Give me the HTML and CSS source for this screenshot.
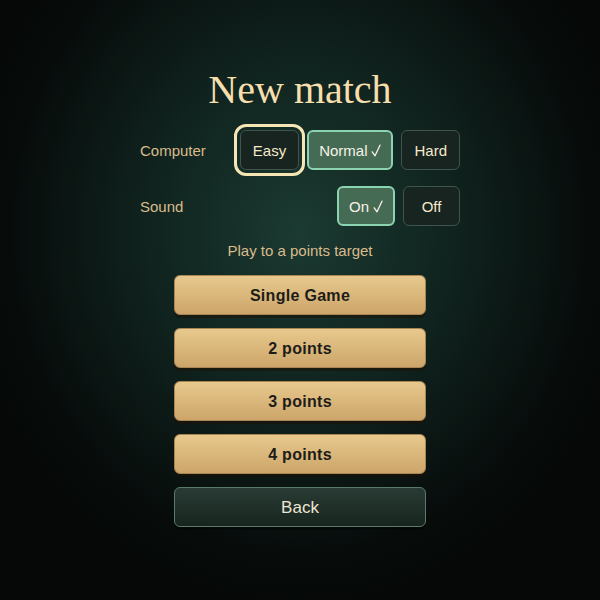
FILE: index.html
```html
<!DOCTYPE html>
<html lang="en">
<head>
<meta charset="utf-8">
<title>New match</title>
<link rel="stylesheet" href="styles.css">
</head>
<body>
<main class="screen">
  <h1 class="title">New match</h1>
  <div class="settings">
    <div class="row">
      <span class="label">Computer</span>
      <div class="choices">
        <button class="choice focused">Easy</button>
        <button class="choice selected">Normal<svg class="check" viewBox="0 0 10 13" width="10" height="13" aria-hidden="true"><path d="M1.2 7.8 L4 11.8 L9 1.2" fill="none" stroke="currentColor" stroke-width="1.3" stroke-linecap="round" stroke-linejoin="round"/></svg></button>
        <button class="choice">Hard</button>
      </div>
    </div>
    <div class="row">
      <span class="label">Sound</span>
      <div class="choices">
        <button class="choice selected">On<svg class="check" viewBox="0 0 10 13" width="10" height="13" aria-hidden="true"><path d="M1.2 7.8 L4 11.8 L9 1.2" fill="none" stroke="currentColor" stroke-width="1.3" stroke-linecap="round" stroke-linejoin="round"/></svg></button>
        <button class="choice">Off</button>
      </div>
    </div>
  </div>
  <p class="subtitle">Play to a points target</p>
  <div class="menu">
    <button class="gold">Single Game</button>
    <button class="gold">2 points</button>
    <button class="gold">3 points</button>
    <button class="gold">4 points</button>
    <button class="back">Back</button>
  </div>
</main>
</body>
</html>
```
FILE: styles.css
```css
html, body {
  margin: 0;
  padding: 0;
  height: 100%;
}
body {
  background: radial-gradient(ellipse 340px 380px at 300px 230px, #1b3a32 0%, #10231e 45%, #070c0b 85%, #050807 100%);
  background-color: #050807;
  font-family: "Liberation Sans", Arial, sans-serif;
}
.screen {
  width: 320px;
  margin: 0 auto;
  padding-top: 67px;
  display: flex;
  flex-direction: column;
  align-items: center;
}
.title {
  margin: 0;
  font-family: "Liberation Serif", "Times New Roman", serif;
  font-weight: normal;
  font-size: 40px;
  line-height: 45px;
  color: #f6dfad;
}
.settings {
  width: 320px;
  margin-top: 18px;
  display: flex;
  flex-direction: column;
  gap: 16px;
}
.row {
  display: flex;
  justify-content: space-between;
  align-items: center;
}
.label {
  font-size: 15px;
  color: #d9bb8c;
}
.choices {
  display: flex;
  gap: 8px;
}
.choice {
  height: 40px;
  min-width: 57px;
  padding: 0 12px;
  display: inline-flex;
  align-items: center;
  justify-content: center;
  font-family: inherit;
  font-size: 15px;
  color: #f5eacd;
  background: #18241f;
  border: 1px solid #3f544c;
  border-radius: 6px;
}
.choice.selected {
  background: #466b55;
  border: 2px solid #8cd3b2;
  padding: 0 10px;
  color: #f7f2e6;
}
.check {
  margin-left: 4px;
  margin-top: 1px;
}
.choice.focused {
  outline: 3px solid #f7e6b5;
  outline-offset: 3px;
}
.subtitle {
  margin: 16px 0 0;
  font-size: 15px;
  line-height: 18px;
  color: #d9bb8c;
}
.menu {
  width: 252px;
  margin-top: 15px;
  display: flex;
  flex-direction: column;
  gap: 13px;
}
.gold, .back {
  height: 40px;
  width: 100%;
  padding-top: 2px;
  border-radius: 6px;
  font-family: inherit;
}
.gold {
  background: linear-gradient(to bottom, #e8c98d, #cca56a);
  border: 1px solid #a98553;
  box-shadow: 0 3px 0 rgba(30, 18, 6, 0.55);
  font-size: 16px;
  font-weight: bold;
  color: #1d1c19;
  letter-spacing: 0.3px;
}
.back {
  background: linear-gradient(to bottom, #293b34, #18251f);
  border: 1px solid #5a7b69;
  box-shadow: 0 3px 0 rgba(0, 0, 0, 0.35);
  font-size: 17px;
  color: #ede5d3;
}
```
